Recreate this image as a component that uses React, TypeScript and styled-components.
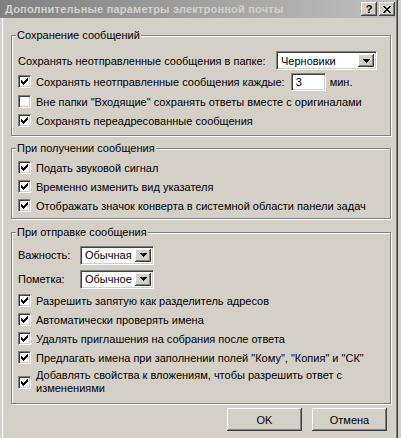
import React from 'react';
import styled, { createGlobalStyle } from 'styled-components';

const GlobalStyle = createGlobalStyle`
  html, body {
    margin: 0;
    padding: 0;
    background: #d4d0c8;
  }
  body {
    font-family: "Liberation Sans", Arial, sans-serif;
    font-size: 11px;
    color: #000;
  }
`;

const Window = styled.div`
  width: 401px;
  height: 438px;
  box-sizing: border-box;
  padding-right: 5px;
  background: #d4d0c8;
  box-shadow: inset -3px 0 0 #d4d0c8, inset -4px 0 0 #404040, inset -5px 0 0 #808080;
  display: flex;
  flex-direction: column;
  overflow: hidden;
`;

const TitleBar = styled.div`
  height: 18px;
  flex: none;
  display: flex;
  align-items: center;
  padding: 0 1px 0 5px;
  background: linear-gradient(to right, #808080, #c0c0c0);
  color: #d4d0c8;
  font-weight: bold;
`;

const Caption = styled.span`
  flex: 1;
  white-space: nowrap;
  letter-spacing: 0.2px;
`;

const CaptionButton = styled.span`
  width: 16px;
  height: 14px;
  box-sizing: border-box;
  margin-left: 2px;
  background: #d4d0c8;
  color: #000;
  display: flex;
  align-items: center;
  justify-content: center;
  font-weight: bold;
  font-size: 11px;
  box-shadow: inset -1px -1px 0 #404040, inset 1px 1px 0 #fff, inset -2px -2px 0 #808080;
`;

const Client = styled.div`
  flex: 1;
  padding: 11px 5px 0 11px;
  box-shadow: inset 2px 0 0 #d4d0c8, inset 3px 0 0 #fff;
  display: flex;
  flex-direction: column;
`;

const Group = styled.fieldset<{ $gap?: number }>`
  margin: ${(p) => p.$gap ?? 0}px 0 0 0;
  padding: 0;
  width: 380px;
  box-sizing: border-box;
  min-inline-size: 0;
  border: 1px solid #808080;
  box-shadow: 1px 1px 0 #fff, inset 1px 1px 0 #fff;
`;

const Legend = styled.legend`
  margin-left: 4px;
  padding: 0 1px;
  line-height: 13px;
  background: #d4d0c8;
`;

const GroupBody = styled.div<{ $top: number; $bottom: number }>`
  padding: ${(p) => p.$top}px 13px ${(p) => p.$bottom}px 6px;
  display: flex;
  flex-direction: column;
`;

const Row = styled.div<{ $h: number }>`
  height: ${(p) => p.$h}px;
  display: flex;
  align-items: center;
  white-space: nowrap;
`;

const Label = styled.span<{ $w?: number }>`
  flex: none;
  ${(p) => (p.$w ? `width: ${p.$w}px;` : '')}
`;

const Sunken = styled.span`
  box-sizing: border-box;
  background: #fff;
  border-top: 1px solid #808080;
  border-left: 1px solid #808080;
  border-right: 1px solid #fff;
  border-bottom: 1px solid #fff;
  box-shadow: inset 1px 1px 0 #404040, inset -1px -1px 0 #d4d0c8;
`;

const Box = styled(Sunken)`
  width: 13px;
  height: 13px;
  flex: none;
  display: flex;
  align-items: center;
  justify-content: center;
  margin-right: 5px;
`;

const Combo = styled(Sunken)<{ $w: number; $push?: boolean }>`
  width: ${(p) => p.$w}px;
  height: 19px;
  flex: none;
  display: flex;
  align-items: stretch;
  padding: 2px;
  ${(p) => (p.$push ? 'margin-left: auto;' : '')}
`;

const ComboText = styled.span`
  flex: 1;
  display: flex;
  align-items: center;
  padding-left: 2px;
`;

const DropButton = styled.span`
  width: 16px;
  flex: none;
  background: #d4d0c8;
  display: flex;
  align-items: center;
  justify-content: center;
  box-shadow: inset -1px -1px 0 #404040, inset 1px 1px 0 #fff, inset -2px -2px 0 #808080;
`;

const Field = styled(Sunken)`
  width: 35px;
  height: 18px;
  flex: none;
  display: flex;
  align-items: center;
  padding-left: 4px;
  margin: 0 4px 0 6px;
`;

const Multi = styled.span`
  line-height: 13px;
  white-space: normal;
`;

const Footer = styled.div`
  display: flex;
  justify-content: flex-end;
  gap: 10px;
  padding: 4px 4px 0 0;
`;

const Button = styled.span`
  width: 75px;
  height: 23px;
  box-sizing: border-box;
  display: flex;
  align-items: center;
  justify-content: center;
  background: #d4d0c8;
  box-shadow: inset -1px -1px 0 #404040, inset 1px 1px 0 #fff, inset -2px -2px 0 #808080;
`;

const Tick = () => (
  <svg width="7" height="7" viewBox="0 0 7 7" shapeRendering="crispEdges">
    <path
      fill="#000"
      d="M6 0h1v3h-1zM5 1h1v3h-1zM4 2h1v3h-1zM0 2h1v3h-1zM1 3h1v3h-1zM2 4h1v3h-1zM3 3h1v3h-1z"
    />
  </svg>
);

const Arrow = () => (
  <svg width="7" height="4" viewBox="0 0 7 4" shapeRendering="crispEdges">
    <path fill="#000" d="M0 0h7v1h-7zM1 1h5v1h-5zM2 2h3v1h-3zM3 3h1v1h-1z" />
  </svg>
);

const CloseGlyph = () => (
  <svg width="8" height="7" viewBox="0 0 8 7" shapeRendering="crispEdges">
    <path
      fill="#000"
      d="M0 0h2v1h-2zM6 0h2v1h-2zM1 1h2v1h-2zM5 1h2v1h-2zM2 2h4v1h-4zM3 3h2v1h-2zM2 4h4v1h-4zM1 5h2v1h-2zM5 5h2v1h-2zM0 6h2v1h-2zM6 6h2v1h-2z"
    />
  </svg>
);

const Check: React.FC<{ checked?: boolean; children: React.ReactNode; h?: number }> = ({
  checked = true,
  children,
  h = 19,
}) => (
  <Row $h={h}>
    <Box>{checked && <Tick />}</Box>
    {children}
  </Row>
);

const Select: React.FC<{ value: string; w: number; push?: boolean }> = ({ value, w, push }) => (
  <Combo $w={w} $push={push}>
    <ComboText>{value}</ComboText>
    <DropButton>
      <Arrow />
    </DropButton>
  </Combo>
);

export default function App() {
  return (
    <>
      <GlobalStyle />
      <Window>
        <TitleBar>
          <Caption>Дополнительные параметры электронной почты</Caption>
          <CaptionButton>?</CaptionButton>
          <CaptionButton>
            <CloseGlyph />
          </CaptionButton>
        </TitleBar>
        <Client>
          <Group>
            <Legend>Сохранение сообщений</Legend>
            <GroupBody $top={8} $bottom={5}>
              <Row $h={21}>
                <Label>Сохранять неотправленные сообщения в папке:</Label>
                <Select value="Черновики" w={101} push />
              </Row>
              <Check h={21}>
                <Label>Сохранять неотправленные сообщения каждые:</Label>
                <Field>3</Field>
                <Label>мин.</Label>
              </Check>
              <Check checked={false}>Вне папки "Входящие" сохранять ответы вместе с оригиналами</Check>
              <Check>Сохранять переадресованные сообщения</Check>
            </GroupBody>
          </Group>

          <Group $gap={6}>
            <Legend>При получении сообщения</Legend>
            <GroupBody $top={3} $bottom={3}>
              <Check>Подать звуковой сигнал</Check>
              <Check>Временно изменить вид указателя</Check>
              <Check>Отображать значок конверта в системной области панели задач</Check>
            </GroupBody>
          </Group>

          <Group $gap={7}>
            <Legend>При отправке сообщения</Legend>
            <GroupBody $top={4} $bottom={6}>
              <Row $h={24}>
                <Label $w={62}>Важность:</Label>
                <Select value="Обычная" w={74} />
              </Row>
              <Row $h={24}>
                <Label $w={62}>Пометка:</Label>
                <Select value="Обычное" w={74} />
              </Row>
              <Check>Разрешить запятую как разделитель адресов</Check>
              <Check>Автоматически проверять имена</Check>
              <Check>Удалять приглашения на собрания после ответа</Check>
              <Check>Предлагать имена при заполнении полей "Кому", "Копия" и "СК"</Check>
              <Check h={30}>
                <Multi>
                  Добавлять свойства к вложениям, чтобы разрешить ответ с
                  <br />
                  изменениями
                </Multi>
              </Check>
            </GroupBody>
          </Group>

          <Footer>
            <Button>OK</Button>
            <Button>Отмена</Button>
          </Footer>
        </Client>
      </Window>
    </>
  );
}
